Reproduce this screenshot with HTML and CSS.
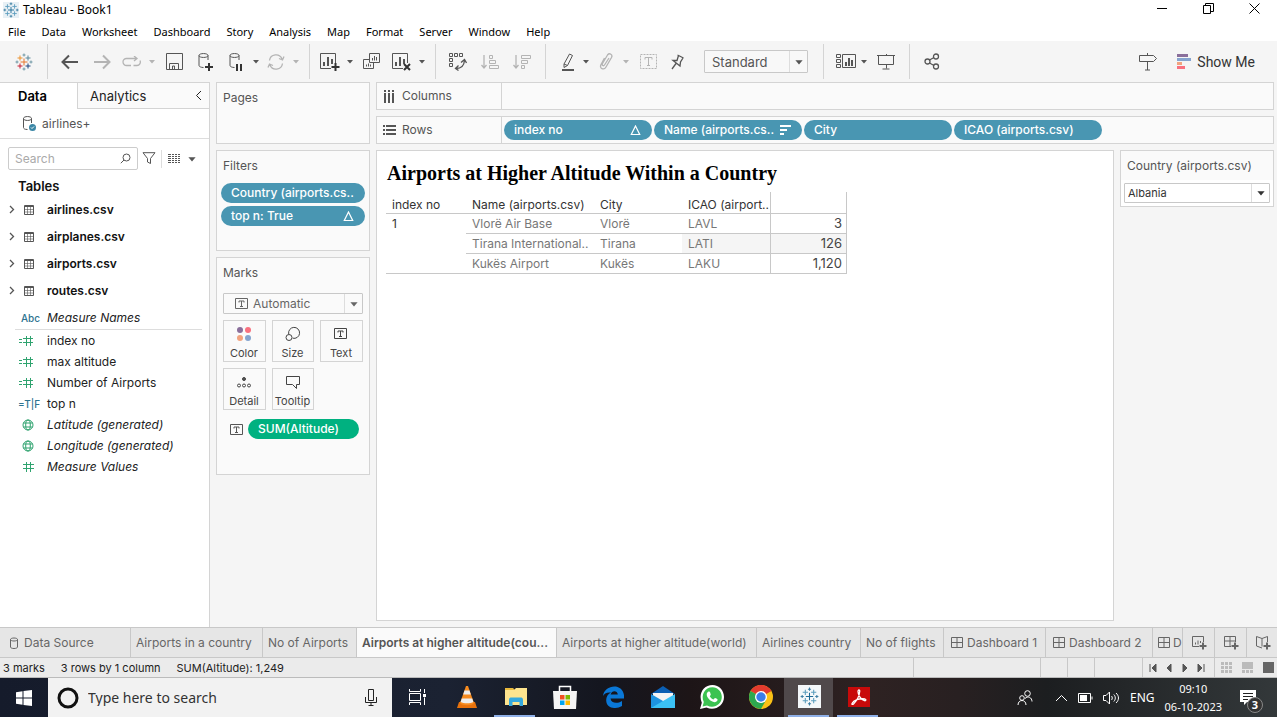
FILE: index.html
```
<!DOCTYPE html>
<html lang="en">
<head>
<meta charset="utf-8">
<title>Tableau - Book1</title>
<link rel="stylesheet" href="styles.css">
</head>
<body>
<svg class="sprite" aria-hidden="true">
  <symbol id="tableau" viewBox="0 0 18 18">
    <path class="c1" d="M9 5.500v7M5.500 9h7"/>
    <path class="c2" d="M5 2.500v5M2.500 5h5"/>
    <path class="c3" d="M13 2.500v5M10.500 5h5"/>
    <path class="c4" d="M5 10.500v5M2.500 13h5"/>
    <path class="c5" d="M13 10.500v5M10.500 13h5"/>
    <path class="c6" d="M9 .5v3M7.500 2h3M9 14.500v3M7.500 16h3M2 7.500v3M.5 9h3M16 7.500v3M14.500 9h3"/>
  </symbol>
  <symbol id="caret" viewBox="0 0 8 5"><path fill="currentColor" d="M1 1h6L4 4.500z"/></symbol>
  <symbol id="cyl" viewBox="0 0 18 18"><path d="M3 3.500v10c0 1 2 2 4.500 2M12 8V3.500M3 3.500C3 .9 12 .9 12 3.500S3 6.100 3 3.500"/></symbol>
  <symbol id="table" viewBox="0 0 12 12"><path d="M1.500 1.500h9v9h-9zM1 2.500h10"/><path opacity=".6" d="M1.500 5.500h9M1.500 8h9M4.500 3v7M7.500 3v7"/></symbol>
  <symbol id="chev" viewBox="0 0 6 9"><path stroke-width="1.300" d="M1 1l3.500 3.500L1 8"/></symbol>
  <symbol id="hash" viewBox="0 0 18 12"><path d="M8.500 1v10M12.500 1v10M5 3.500h11M5 7.500h11"/></symbol>
  <symbol id="eqhash" viewBox="0 0 18 12"><path d="M8.500 1v10M12.500 1v10M5 3.500h10M5 7.500h10M1 4.500h3M1 7.500h3"/></symbol>
  <symbol id="globe" viewBox="0 0 18 12"><circle cx="10" cy="6" r="5"/><ellipse cx="10" cy="6" rx="2.300" ry="5"/><path d="M5.500 4h9M5.500 8h9"/></symbol>
  <symbol id="textbox" viewBox="0 0 13 11"><path d="M.5.5h12v10H.5zM4 4.500v-1.500h5v1.500M6.500 3v5M5 8.500h3"/></symbol>
  <symbol id="dash" viewBox="0 0 12 12"><path d="M.5.5h11v10H.5zM6 .5v10M.5 5.500h11"/></symbol>
  <symbol id="delta" viewBox="0 0 11 11"><path stroke-width="1.200" d="M5.500 1L9.700 9.500H1.300z"/></symbol>
</svg>

<header class="titlebar">
  <svg class="ico app-icon blue" width="16" height="16"><use href="#tableau"/></svg>
  <span class="title">Tableau - Book1</span>
  <div class="win-buttons">
    <button aria-label="Minimize"><svg width="11" height="11"><path d="M0 5.500h10"/></svg></button>
    <button aria-label="Restore"><svg width="11" height="11"><path d="M.5 2.500h7v8h-7zM2.500 2.500v-2h8v8h-3"/></svg></button>
    <button aria-label="Close"><svg width="11" height="11"><path d="M.5.5l10 10M10.500.5l-10 10"/></svg></button>
  </div>
</header>

<nav class="menu">
  <button>File</button><button>Data</button><button>Worksheet</button><button>Dashboard</button><button>Story</button><button>Analysis</button><button>Map</button><button>Format</button><button>Server</button><button>Window</button><button>Help</button>
</nav>

<div class="toolbar">
  <button class="tool logo" aria-label="Start page"><svg class="ico" width="18" height="18"><use href="#tableau"/></svg></button>
  <i class="sep"></i>
  <button class="tool" aria-label="Undo"><svg class="ico thick" width="18" height="16"><path d="M17 8H2M8 1.500L1.500 8 8 14.500"/></svg></button>
  <button class="tool off" aria-label="Redo"><svg class="ico thick" width="18" height="16"><path d="M1 8h15M10 1.500L16.500 8 10 14.500"/></svg></button>
  <button class="tool mid off" aria-label="Replay"><svg class="ico mid-line" width="20" height="12"><path d="M9 9.500H4.500a3.500 3.500 0 010-7H14M11.500 9.500H15a3.500 3.500 0 003-5M12 0l3 2.500L12 5"/></svg></button>
  <button class="tool drop off" aria-label="Replay options"><svg width="8" height="5"><use href="#caret"/></svg></button>
  <button class="tool" aria-label="Save"><svg class="ico" width="17" height="17"><path d="M.5.500h16v16H.5zM3.500 16v-5.500h9V16M6.500 16v-3h2v3"/></svg></button>
  <button class="tool" aria-label="New data source"><svg class="ico" width="18" height="20" viewBox="1 0 18 20"><use href="#cyl" width="18" height="18"/><path class="dark" d="M13 11v8M9 15h8"/></svg></button>
  <button class="tool mid" aria-label="Pause updates"><svg class="ico" width="18" height="20" viewBox="0 0 18 20"><use href="#cyl" width="18" height="18"/><path class="dark" d="M10 12v7M14 12v7"/></svg></button>
  <button class="tool drop" aria-label="Pause options"><svg width="8" height="5"><use href="#caret"/></svg></button>
  <button class="tool mid off" aria-label="Refresh"><svg class="ico mid-line" width="18" height="16"><path d="M2.500 6.500A6.500 6.500 0 0115 5M15.500 9.500A6.500 6.500 0 013 11M17 2.500L15.500 6 12 4.500M1 13.500L2.500 10 6 11.500"/></svg></button>
  <button class="tool drop off" aria-label="Refresh options"><svg width="8" height="5"><use href="#caret"/></svg></button>
  <i class="sep"></i>
  <button class="tool mid" aria-label="New worksheet"><svg class="ico" width="20" height="18"><path d="M11 15.500H.5V.5h15V10"/><path class="bars" d="M4 13V9M8 13V4M12 11V6"/><path class="dark" d="M15.500 10v8M11.500 14h8"/></svg></button>
  <button class="tool drop" aria-label="New options"><svg width="8" height="5"><use href="#caret"/></svg></button>
  <button class="tool" aria-label="Duplicate"><svg class="ico" width="18" height="17"><path d="M6.500.5h10v9h-10zM6 6.500H.5v9h10V10M9.500 7.500V5M11.500 7.500V3M13.500 7.500V4M3.500 13.500v-2M5.500 13.500v-3M7.500 13.500v-2"/></svg></button>
  <button class="tool mid" aria-label="Clear"><svg class="ico" width="20" height="18"><path d="M11 15.500H.5V.5h15V10"/><path class="bars" d="M4 13V9M8 13V4M12 11V6"/><path class="dark" d="M12 11l6 6M18 11l-6 6"/></svg></button>
  <button class="tool drop" aria-label="Clear options"><svg width="8" height="5"><use href="#caret"/></svg></button>
  <i class="sep"></i>
  <button class="tool" aria-label="Swap"><svg class="ico" width="18" height="18"><path d="M.5.500h3v3h-3zM5.500.500h3v3h-3zM10.500.500h3v3h-3zM.5 5.500h3v3h-3zM.5 10.500h3v3h-3z"/><path class="mid-line" d="M7 15.500c5 0 8-2 8.500-8M12 9.500l3.500-3 2 3.500M9.500 12.500L6.500 15.500l3 2"/></svg></button>
  <button class="tool off" aria-label="Sort ascending"><svg class="ico" width="18" height="16"><path class="mid-line" d="M3 1v12M.5 11L3 14l2.500-3"/><path d="M8.500 1.500h3v3h-3zM8.500 6.500h6v3h-6zM8.500 11.500h9v3h-9z"/></svg></button>
  <button class="tool off" aria-label="Sort descending"><svg class="ico" width="18" height="16"><path class="mid-line" d="M3 1v12M.5 11L3 14l2.500-3"/><path d="M8.500 1.500h9v3h-9zM8.500 6.500h6v3h-6zM8.500 11.500h3v3h-3z"/></svg></button>
  <i class="sep"></i>
  <button class="tool wide" aria-label="Highlight"><svg class="ico" width="14" height="18"><path d="M3 11L8.500 1l3 1.500L6.500 12.500l-3.500 2zM3 11l3.500 1.500"/><path class="bars" d="M1 17h12"/></svg></button>
  <button class="tool drop" aria-label="Highlight options"><svg width="8" height="5"><use href="#caret"/></svg></button>
  <button class="tool mid off" aria-label="Group"><svg class="ico mid-line" width="14" height="17"><path d="M10 5L5.500 12c-1 1.500-3 .5-2-1.500L8.500 2c2-2.500 5.500-.5 4 2.500L7 14c-2 3.500-7 1.500-5-2.500L5.500 5"/></svg></button>
  <button class="tool drop off" aria-label="Group options"><svg width="8" height="5"><use href="#caret"/></svg></button>
  <button class="tool off" aria-label="Show mark labels"><svg class="ico" width="17" height="15"><path stroke-dasharray="2 1" d="M.5.500h16v14H.5z"/><path d="M5 5.500v-2h7v2M8.500 3.500v8M7 11.500h3"/></svg></button>
  <button class="tool mid" aria-label="Fix axes"><svg class="ico mid-line" width="14" height="16"><path d="M6.500 1L12.500 4M7.500 1.500L6 6.500 2 6.500 9 12l.5-4L12 4M5 9.500L1 15"/></svg></button>
  <label class="picker fit"><select aria-label="Fit"><option>Standard</option></select><span class="arrow"><svg width="8" height="5"><use href="#caret"/></svg></span></label>
  <i class="sep"></i>
  <button class="tool wide" aria-label="Show cards"><svg class="ico" width="20" height="15"><path d="M.5.500h4v3h-4zM.5 5.500h4v3h-4zM.5 10.500h4v3h-4zM6.500.5h13v13h-13z"/><path class="bars" d="M10 12V8M13 12V4M16 12V6"/></svg></button>
  <button class="tool drop" aria-label="Card options"><svg width="8" height="5"><use href="#caret"/></svg></button>
  <button class="tool" aria-label="Presentation mode"><svg class="ico" width="18" height="16"><path d="M0 1.500h18M1.500 2v8.500h15V2M9.500 0v1M9.500 10.500v4M5.500 15h7"/></svg></button>
  <i class="sep"></i>
  <button class="tool" aria-label="Share"><svg class="ico mid-line" width="16" height="17"><circle cx="3.500" cy="8.500" r="2.500"/><circle cx="12" cy="3.500" r="2.500"/><circle cx="12" cy="13.500" r="2.500"/><path d="M5.500 7L10 4.500M5.500 10l4.500 2.500"/></svg></button>
  <div class="grow"></div>
  <button class="tool" aria-label="Guide"><svg class="ico" width="20" height="19"><path d="M1.500 3.500h14L18.500 6.500l-3 3h-14zM9.500 1v2M9.500 10v8M7 18h5"/></svg></button>
  <button class="showme"><svg width="14" height="15"><path fill="#8a6f9b" d="M0 0h11v3H0z"/><path fill="#86a4cf" d="M0 4h14v3H0z"/><path fill="#f2a37f" d="M0 8h5v3H0z"/><path fill="#f9717f" d="M0 12h8v3H0z"/></svg>Show Me</button>
</div>

<main class="workspace">
  <aside class="data-pane">
    <div class="pane-tabs">
      <button class="pane-tab on">Data</button>
      <button class="pane-tab">Analytics<svg class="ico" width="7" height="11"><path d="M6 1L1.500 5.500 6 10"/></svg></button>
    </div>
    <button class="source"><svg class="ico" width="18" height="18"><path d="M1.500 3.500v9c0 1 1 2 4 2M9.500 8V3.500M1.500 3.500C1.500.9 9.500.9 9.500 3.500S1.500 6.100 1.500 3.500"/><circle cx="10.500" cy="12.500" r="3.500" fill="#3b87a6" stroke="none"/><path stroke="#fff" d="M9 12.500l1 1 2-2"/></svg>airlines+</button>
    <div class="find">
      <label class="search"><input type="text" placeholder="Search" aria-label="Search"><svg class="ico" width="11" height="11"><circle cx="6.500" cy="4.500" r="3.500"/><path d="M4 7L.8 10.200"/></svg></label>
      <button aria-label="Filter fields"><svg class="ico" width="14" height="13"><path d="M1 .7h12L8.500 6.500v5l-3-1.500V6.500z"/></svg></button>
      <i></i>
      <button aria-label="View options"><svg class="ico" width="12" height="10"><path stroke-dasharray="3 1 2 1 2 1 2 9" d="M0 .5h12M0 2.500h12M0 4.500h12M0 6.500h12M0 8.500h12"/></svg></button>
      <button aria-label="More" class="more"><svg width="8" height="5"><use href="#caret"/></svg></button>
    </div>
    <h2>Tables</h2>
    <ul class="tables">
      <li><button><svg class="ico" width="6" height="9"><use href="#chev"/></svg><svg class="ico" width="12" height="12"><use href="#table"/></svg>airlines.csv</button></li>
      <li><button><svg class="ico" width="6" height="9"><use href="#chev"/></svg><svg class="ico" width="12" height="12"><use href="#table"/></svg>airplanes.csv</button></li>
      <li><button><svg class="ico" width="6" height="9"><use href="#chev"/></svg><svg class="ico" width="12" height="12"><use href="#table"/></svg>airports.csv</button></li>
      <li><button><svg class="ico" width="6" height="9"><use href="#chev"/></svg><svg class="ico" width="12" height="12"><use href="#table"/></svg>routes.csv</button></li>
    </ul>
    <ul class="fields">
      <li class="names gen"><span class="kind">Abc</span>Measure Names</li>
      <li><span class="kind green"><svg class="ico" width="18" height="12"><use href="#eqhash"/></svg></span>index no</li>
      <li><span class="kind green"><svg class="ico" width="18" height="12"><use href="#eqhash"/></svg></span>max altitude</li>
      <li><span class="kind green"><svg class="ico" width="18" height="12"><use href="#eqhash"/></svg></span>Number of Airports</li>
      <li><span class="kind">=T|F</span>top n</li>
      <li class="gen"><span class="kind green"><svg class="ico" width="18" height="12"><use href="#globe"/></svg></span>Latitude (generated)</li>
      <li class="gen"><span class="kind green"><svg class="ico" width="18" height="12"><use href="#globe"/></svg></span>Longitude (generated)</li>
      <li class="gen"><span class="kind green"><svg class="ico" width="18" height="12"><use href="#hash"/></svg></span>Measure Values</li>
    </ul>
  </aside>

  <section class="cards">
    <div class="card pages"><h3>Pages</h3></div>
    <div class="card filters">
      <h3>Filters</h3>
      <button class="pill"><span>Country (airports.cs..</span></button>
      <button class="pill"><span>top n: True</span><svg class="ico" width="11" height="11"><use href="#delta"/></svg></button>
    </div>
    <div class="card marks">
      <h3>Marks</h3>
      <label class="picker kindpick"><svg class="ico" width="13" height="11"><use href="#textbox"/></svg><select aria-label="Mark type"><option>Automatic</option></select><span class="arrow"><svg width="8" height="5"><use href="#caret"/></svg></span></label>
      <div class="mark-grid">
        <button><svg width="16" height="16"><circle cx="4" cy="4" r="3" fill="#8a6f9b"/><circle cx="12" cy="4" r="3" fill="#f9717f"/><circle cx="4" cy="12" r="3" fill="#f2a37f"/><circle cx="12" cy="12" r="3" fill="#86a4cf"/></svg>Color</button>
        <button><svg class="ico" width="16" height="16"><path d="M3.700 8a5.500 5.500 0 1 1 4 4.200"/><circle cx="4" cy="11.500" r="3"/></svg>Size</button>
        <button><svg class="ico" width="16" height="16" viewBox="-1 -2 16 16"><use href="#textbox" width="13" height="11"/></svg>Text</button>
        <button><svg class="ico" width="16" height="16"><circle cx="8" cy="5" r="1.500" fill="#555"/><circle cx="3" cy="11.500" r="1.500"/><circle cx="8" cy="11.500" r="1.500"/><circle cx="13" cy="11.500" r="1.500"/></svg>Detail</button>
        <button><svg class="ico" width="16" height="16"><path d="M1.500 2.500h13v8h-3v4l-4-4h-6z"/></svg>Tooltip</button>
      </div>
      <div class="measure"><svg class="ico" width="13" height="11"><use href="#textbox"/></svg><button class="pill agg"><span>SUM(Altitude)</span></button></div>
    </div>
  </section>

  <section class="stage">
    <div class="shelf"><div class="shelf-name"><svg class="ico" width="13" height="13"><path stroke-width="2" stroke-dasharray="2 1 10 9" d="M2 0v13M6 0v13M10 0v13"/></svg>Columns</div></div>
    <div class="shelf"><div class="shelf-name"><svg class="ico" width="13" height="11"><path stroke-width="2" stroke-dasharray="2 1 10 9" d="M0 1h13M0 5h13M0 9h13"/></svg>Rows</div>
      <div class="shelf-pills">
        <button class="pill"><span>index no</span><svg class="ico" width="11" height="11"><use href="#delta"/></svg></button>
        <button class="pill"><span>Name (airports.cs..</span><svg class="ico" width="11" height="11"><path stroke-width="2" d="M0 1h11M0 5h7M0 9h4"/></svg></button>
        <button class="pill"><span>City</span></button>
        <button class="pill"><span>ICAO (airports.csv)</span></button>
      </div>
    </div>
    <div class="stage-body">
      <div class="view">
        <h1>Airports at Higher Altitude Within a Country</h1>
        <table>
          <colgroup><col class="w-idx"><col class="w-name"><col class="w-mid"><col class="w-mid"><col class="w-val"></colgroup>
          <thead><tr><th>index no</th><th>Name (airports.csv)</th><th>City</th><th>ICAO (airport..</th><td class="val"></td></tr></thead>
          <tbody>
            <tr><th rowspan="3">1</th><td>Vlorë Air Base</td><td>Vlorë</td><td>LAVL</td><td class="val">3</td></tr>
            <tr><td>Tirana International..</td><td>Tirana</td><td class="band">LATI</td><td class="val band">126</td></tr>
            <tr><td>Kukës Airport</td><td>Kukës</td><td>LAKU</td><td class="val">1,120</td></tr>
          </tbody>
        </table>
      </div>
      <div class="filter-card">
        <label for="country">Country (airports.csv)</label>
        <div class="filter-body"><div class="picker"><select id="country"><option>Albania</option></select><span class="arrow"><svg width="8" height="5"><use href="#caret"/></svg></span></div></div>
      </div>
    </div>
  </section>
</main>

<nav class="sheets">
  <button class="s-source"><svg class="ico" width="10" height="12"><path d="M1.500 2.500v7.500c0 2 7 2 7 0V2.500M1.500 2.500c0-2 7-2 7 0s-7 2-7 0"/></svg>Data Source</button>
  <button class="s-132">Airports in a country</button>
  <button class="s-94">No of Airports</button>
  <button class="s-200 on">Airports at higher altitude(cou...</button>
  <button class="s-200">Airports at higher altitude(world)</button>
  <button class="s-104">Airlines country</button>
  <button class="s-83">No of flights</button>
  <button class="s-102 board"><svg class="ico" width="12" height="12"><use href="#dash"/></svg>Dashboard 1</button>
  <button class="s-107 board"><svg class="ico" width="12" height="12"><use href="#dash"/></svg>Dashboard 2</button>
  <button class="s-cut"><svg class="ico" width="12" height="12"><use href="#dash"/></svg>D</button>
  <button class="s-new" aria-label="New worksheet"><svg class="ico" width="16" height="15"><path d="M8 11.500H1.500v-10h11V7M4.500 9.500v-2M7 9.500v-4M9.500 8V6"/><path class="bars" d="M12 7.500v7M8.500 11h7"/></svg></button>
  <button class="s-new" aria-label="New dashboard"><svg class="ico" width="16" height="15"><path d="M8 11.500H1.500v-10h11V7M7 1.500v10M1.500 6h11"/><path class="bars" d="M12 7.500v7M8.500 11h7"/></svg></button>
  <button class="s-new" aria-label="New story"><svg class="ico" width="16" height="15"><path d="M7 13L1.500 11V1.500L7 3.500 12.500 1.500V7M7 3.500v8"/><path class="bars" d="M12 7.500v7M8.500 11h7"/></svg></button>
</nav>

<div class="status">
  <span>3 marks</span><span>3 rows by 1 column</span><span>SUM(Altitude): 1,249</span>
  <div class="slots"><i class="w127"></i><i></i><i></i><i class="w48"></i></div>
  <div class="pager">
    <button aria-label="First"><svg width="8" height="8"><path d="M1 0v8M7 0v8L3 4z"/></svg></button>
    <button aria-label="Previous"><svg width="8" height="8"><path d="M6 0v8L2 4z"/></svg></button>
    <button aria-label="Next"><svg width="8" height="8"><path d="M2 0v8L6 4z"/></svg></button>
    <button aria-label="Last"><svg width="8" height="8"><path d="M7 0v8M1 0v8L5 4z"/></svg></button>
  </div>
  <div class="modes">
    <button aria-label="Sheet sorter"><svg width="11" height="11"><path fill="#bbb" d="M0 0h3v3H0zM4 0h3v3H4zM8 0h3v3H8zM0 4h3v3H0zM4 4h3v3H4zM8 4h3v3H8zM0 8h3v3H0zM4 8h3v3H4zM8 8h3v3H8z"/></svg></button>
    <button aria-label="Filmstrip"><svg width="11" height="11"><path fill="#bbb" d="M0 0h11v7H0zM0 8h3v3H0zM4 8h3v3H4zM8 8h3v3H8z"/></svg></button>
    <button aria-label="Tabs"><svg width="11" height="11"><path fill="#666" d="M0 0h11v11H0z"/></svg></button>
  </div>
</div>

<footer class="taskbar">
  <button class="start" aria-label="Start"><svg width="16" height="16"><path fill="#fff" d="M0 2.200L6.500 1.300V7.500H0zM7.500 1.100L16 0v7.500H7.500zM0 8.500h6.500v6.200L0 13.800zM7.500 8.500H16V16l-8.500-1.100z"/></svg></button>
  <label class="win-search"><svg width="22" height="22"><circle cx="11" cy="11" r="9" fill="none" stroke="#111" stroke-width="3"/></svg><input type="text" placeholder="Type here to search" aria-label="Type here to search"><svg class="mic" width="12" height="17"><path fill="none" stroke="#222" d="M3.500.5h5v11h-5zM.5 8v5.500h11V8M6 14v2M3.500 16.500h5"/></svg></label>
  <button class="app" aria-label="Task view"><svg width="18" height="16"><path fill="none" stroke="#fff" d="M.5 0v2.500h11V0M.5 4.500h11v7H.5zM.5 16v-2.500h11V16M15.500 0v4M15.500 8.500V16"/><path fill="#fff" d="M14 5h3v3h-3z"/></svg></button>
  <button class="app" aria-label="VLC"><svg width="20" height="24"><path fill="#e8720c" d="M2 17h16l2 6H0z"/><path fill="#f78b1f" d="M9 1h2l6 17c-2 3-12 3-14 0z"/><path fill="#eee" d="M7.500 5.500L6.200 9.500h7.600L12.500 5.500zM4.800 13.500l-1.200 3.500c3 1.800 10 1.800 12.800 0l-1.200-3.500z"/></svg></button>
  <button class="app run" aria-label="File Explorer"><svg width="22" height="19"><path fill="#e9b93c" d="M0 1h8l2 2H0z"/><path fill="#fde48e" d="M0 3h9l2-2h11v17H0z"/><path fill="#35a9de" d="M4 19v-6c0-2 1-2.500 2.500-2.500h9c1.500 0 2.500.5 2.500 2.500v6h-3.500v-4h-7v4z"/></svg></button>
  <button class="app" aria-label="Store"><svg width="24" height="24"><path fill="none" stroke="#fff" stroke-width="1.500" d="M6.500 7V1.500h11V7"/><path fill="#f5f5f5" d="M0 6h24l-1 18H1z"/><path fill="#f25022" d="M7 10h4.500v4.500H7z"/><path fill="#7fba00" d="M12.500 10H17v4.500h-4.500z"/><path fill="#00a4ef" d="M7 15.500h4.500V20H7z"/><path fill="#ffb900" d="M12.500 15.500H17V20h-4.500z"/></svg></button>
  <button class="app" aria-label="Edge"><svg width="22" height="22"><path fill="#0a78d7" d="M0 10C1-1 19-4 21 9v3.500H7.500c.5 5 7 5.500 11.500 2.500v5C12 24 3.500 22 3.200 14.500 3 11 5 8 8 6.500 3.500 6 1 8 0 10zM7.600 8.500h7.200C14.500 4 8.500 4 7.600 8.500z"/></svg></button>
  <button class="app" aria-label="Mail"><svg width="24" height="22"><path fill="#0b5fb3" d="M0 8L12 0l12 8z"/><path fill="#f4f4f4" d="M2 7h20v8H2z"/><path fill="#1d93e0" d="M0 8l24 14H0z"/><path fill="#3bc1f5" d="M24 8L0 22h24z"/></svg></button>
  <button class="app" aria-label="WhatsApp"><svg width="24" height="24"><path fill="#fff" d="M0 24l1.800-6.300C-2 9 3.500 0 12.500 0 19 0 24 5.500 24 12c0 9-9.500 14.300-17.500 10.500z"/><path fill="#3cc351" d="M2.600 21.400l1.200-4.300C.5 10 5 2.200 12.500 2.200c5.300 0 9.300 4.500 9.300 9.800 0 7.500-8 12-14.800 8.400z"/><path fill="#fff" d="M8.500 6.500c2-.5 1.800 2 2.300 3.200l-1 1.500c.8 1.600 2 2.700 3.700 3.400l1.400-1.500c1.300.4 3 .8 2.700 2-1 2.700-4 2.400-6.300 1C8 14 4.500 9 8.500 6.500z"/></svg></button>
  <button class="app" aria-label="Chrome"><svg width="24" height="24"><circle cx="12" cy="12" r="12" fill="#fbc116"/><path fill="#e33b2e" d="M12 12L1.600 6C6-2 18-2 22.400 6z"/><path fill="#2da94f" d="M12 12L1.600 6C-3 14 3 24 12 24l5-9z"/><circle cx="12" cy="12" r="6" fill="#fff"/><circle cx="12" cy="12" r="4.700" fill="#3b7de9"/></svg></button>
  <button class="app run active" aria-label="Tableau"><svg class="ico tile blue" width="23" height="23" viewBox="-2 -2 22 22"><use href="#tableau" width="18" height="18"/></svg></button>
  <button class="app run" aria-label="Acrobat"><svg width="22" height="20"><path fill="#c80a0a" d="M0 0h22v20H0z"/><path fill="none" stroke="#fff" stroke-width="1.300" d="M4 16.500c1.500-3.500 7.500-5.500 13-4.500 1.500.5 1 2-.5 1.700C13 13 10 8 10 4.500c0-2 2-2 1.700 0C11.300 9 8 14.500 5.500 17c-1 .8-2 .3-1.500-.5z"/></svg></button>
  <div class="tray">
    <svg class="line" width="16" height="16"><circle cx="10.500" cy="3.500" r="2.800"/><circle cx="5" cy="8" r="2.300"/><path d="M8 8.500c3-3 7-1 7 3M1 15c0-6 8-6 8 0"/></svg>
    <svg class="line chev-up" width="13" height="8"><path d="M1 7l5.500-5.500L12 7"/></svg>
    <svg class="line" width="15" height="10"><path d="M.5.500h12v9H.5zM14 3.500v3"/><path fill="#fff" stroke="none" d="M2 2h7v6H2z"/></svg>
    <svg class="line" width="17" height="14"><path d="M.5 4.500h2.500L6.500 1v12L3 9.500H.5zM8.500 5c1 1 1 3 0 4M10.800 3.500c2 2 2 5 0 7M13 2c3.300 3 3.300 7 0 10"/></svg>
    <span>ENG</span>
    <time>09:10<br>06-10-2023</time>
    <button class="notes" aria-label="3 notifications"><svg width="16" height="15"><path fill="#fff" d="M0 0h16v12H7l-3 3v-3H0z"/><path stroke="#222" d="M3 3.500h10M3 6.500h10M3 9.500h5"/></svg><b>3</b></button>
  </div>
</footer>
</body>
</html>
```

FILE: styles.css
```
* { box-sizing: border-box; }
body {
  margin: 0;
  height: 100vh;
  display: flex;
  flex-direction: column;
  overflow: hidden;
  background: #f5f5f5;
  color: #333;
  font: 12px/16px Inter, "Open Sans", sans-serif;
}
button {
  margin: 0;
  padding: 0;
  border: 0;
  background: none;
  color: inherit;
  font: inherit;
  white-space: nowrap;
}
input, select {
  border: 0;
  outline: 0;
  padding: 0;
  margin: 0;
  background: none;
  color: inherit;
  font: inherit;
  min-width: 0;
  appearance: none;
}
h1, h2, h3, ul { margin: 0; padding: 0; list-style: none; font-weight: 400; }
svg { display: block; flex: none; }
.sprite { position: absolute; width: 0; height: 0; }
.ico { fill: none; stroke: currentColor; stroke-width: 1; }
.ico .dark { stroke: #333; stroke-width: 2; }
.ico .bars { stroke-width: 2; }
.ico.thick { stroke-width: 2; }
.ico .mid-line, .ico.mid-line { stroke-width: 1.3; }
.grow { flex: 1; }

/* logo colours */
.c1 { stroke: var(--c1, #e8762d); }
.c2 { stroke: var(--c2, #eb912c); }
.c3 { stroke: var(--c3, #59879b); }
.c4 { stroke: var(--c4, #c72037); }
.c5 { stroke: var(--c5, #1f447e); }
.c6 { stroke: var(--c6, #7099a6); }
.blue { --c1: #1f6b96; --c2: #5b9dbd; --c3: #5b9dbd; --c4: #5b9dbd; --c5: #5b9dbd; --c6: #3c7ea3; }

.titlebar { display: flex; flex: none; height: 20px; padding-left: 3px; align-items: center; background: #fff; color: #000; font-family: "Noto Sans", sans-serif; }
.app-icon { background: #e8f0f5; }
.title { margin-left: 4px; }
.win-buttons { display: flex; align-self: flex-start; margin-left: auto; }
.win-buttons button { width: 46px; height: 16px; display: grid; place-items: center; }
.win-buttons svg { fill: none; stroke: #000; }

.menu { display: flex; flex: none; height: 21px; padding: 2px 0 0 8px; gap: 16px; align-items: center; background: #fff; color: #000; font-family: "Noto Sans", sans-serif; font-size: 11px; }

.toolbar { display: flex; flex: none; height: 41px; align-items: center; color: #555; }
.tool { flex: none; width: 32px; height: 32px; display: grid; place-items: center; }
.tool.logo { width: 40px; padding-left: 7px; }
.tool.mid { width: 28px; }
.tool.wide { width: 28px; padding-left: 4px; }
.tool.drop { width: 12px; }
.tool.off { color: #b4b4b4; }
.sep { flex: none; width: 1px; height: 35px; margin: 0 6px 0 7px; background: #d4d4d4; }
.picker { display: flex; align-items: center; background: #fff; border: 1px solid #c8c8c8; border-radius: 1px; }
.picker select { flex: 1; }
.arrow { align-self: stretch; display: grid; place-items: center; width: 18px; border-left: 1px solid #ddd; pointer-events: none; }
.arrow svg, .more svg { width: 10px; height: 6px; }
.fit { flex: none; width: 104px; height: 23px; margin: 0 8px 0 12px; padding-left: 7px; background: #f8f8f8; font-size: 13px; }
.showme { display: flex; gap: 6px; align-items: center; margin: 0 22px 0 13px; color: #333; font: 14px/16px Roboto, sans-serif; }

.workspace { flex: 1; min-height: 0; display: flex; gap: 6px; padding-right: 3px; }
.data-pane { flex: none; width: 210px; background: #fff; border: solid #d4d4d4; border-width: 1px 1px 0 0; color: #222; }
.pane-tabs { display: flex; height: 26px; font-size: 13px; }
.pane-tab { flex: 1; display: flex; justify-content: space-between; align-items: center; padding: 0 7px 0 12px; background: #fafafa; border: solid #d4d4d4; border-width: 0 0 1px 1px; }
.pane-tab.on { flex: none; width: 77px; padding-left: 18px; background: #fff; border: 0; font-weight: 600; color: #000; }
.source { width: 100%; height: 30px; display: flex; gap: 2px; align-items: center; padding-left: 22px; border-bottom: 1px solid #ddd; color: #555; }
.find { display: flex; align-items: center; padding: 8px; height: 39px; color: #555; }
.find i { width: 1px; height: 18px; margin: 0 6px 0 5px; background: #ddd; }
.find .more { margin-left: 7px; }
.search { display: flex; align-items: center; width: 130px; height: 23px; margin-right: 4px; padding: 0 6px; border: 1px solid #ccc; border-radius: 2px; }
.search input { flex: 1; }
::placeholder { color: #aaa; opacity: 1; }
h2 { height: 18px; padding-left: 18px; font-size: 13px; font-weight: 600; color: #111; line-height: 16px; }
.tables button { display: flex; align-items: center; height: 27px; padding-left: 9px; font-weight: 600; color: #111; }
.tables svg { color: #555; }
.tables svg + svg { margin: 0 12px 0 8px; }
.fields li { display: flex; align-items: center; height: 21px; }
.fields .names { height: 26px; padding-top: 2px; margin: 0 7px 0 15px; border-bottom: 1px solid #ddd; }
.fields .names .kind { width: 32px; padding-left: 6px; }
.kind { width: 47px; padding-left: 18px; color: #2d7390; font-size: 10px; font-style: normal; font-weight: 500; }
.kind.green { color: #2fa36f; }
.gen { font-style: italic; }

.cards { flex: none; width: 154px; display: flex; flex-direction: column; gap: 6px; color: #555; }
.card { display: flex; flex-direction: column; padding: 7px 4px; background: #fafafa; border: 1px solid #d4d4d4; }
h3 { font-size: 12px; line-height: 16px; margin-left: 2px; }
.pages { height: 62px; }
.filters { height: 101px; }
.marks { height: 218px; }
.pill { display: flex; flex: none; align-items: center; justify-content: space-between; height: 20px; padding: 0 11px 0 10px; border-radius: 10px; background: #4996b2; color: #fff; font-weight: 500; }
.filters h3 { margin-bottom: 9px; }
.filters .pill + .pill { margin-top: 3px; }
.kindpick { height: 21px; margin: 12px 2px 0; padding-left: 11px; gap: 5px; flex: none; background: #fafafa; color: #666; }
.mark-grid { display: grid; grid-template-columns: 43px 42px 43px; gap: 6px; margin: 6px 2px 0; }
.mark-grid button { display: flex; flex-direction: column; align-items: center; justify-content: flex-end; gap: 3px; height: 42px; padding-right: 1px; border: 1px solid #d4d4d4; font-size: 11px; color: #444; }
.measure { display: flex; align-items: center; gap: 5px; margin: 9px 0 0 9px; }
.agg { width: 111px; background: #00b180; }

.stage { flex: 1; min-width: 0; display: flex; flex-direction: column; gap: 6px; padding-bottom: 6px; }
.shelf { flex: none; display: flex; height: 28px; background: #fafafa; border: 1px solid #d4d4d4; color: #555; }
.shelf-name { width: 125px; display: flex; align-items: center; gap: 6px; padding-left: 6px; border-right: 1px solid #d4d4d4; }
.shelf-pills { display: flex; align-items: center; gap: 2px; padding-left: 2px; }
.shelf .pill { width: 148px; }
.stage-body { flex: 1; min-height: 0; display: flex; gap: 6px; align-items: flex-start; }
.view { flex: 1; align-self: stretch; padding: 9px; background: #fff; border: 1px solid #d4d4d4; }
h1 { height: 32px; padding-left: 1px; color: #000; font: bold 20px/26px "Liberation Serif", serif; }
.filter-card { flex: none; width: 154px; border: 1px solid #d4d4d4; background: #fff; color: #555; }
.filter-card > label { display: block; height: 29px; padding: 7px 6px; background: #fafafa; }
.filter-body { padding: 3px; }
.filter-body .picker { height: 20px; padding-left: 3px; color: #333; font-size: 11px; }

table { table-layout: fixed; width: 461px; border-spacing: 0; line-height: 19px; }
.w-idx { width: 80px; }
.w-name { width: 128px; }
.w-mid { width: 88px; }
table th, table td { height: 20px; padding: 0 0 0 6px; border-bottom: 1px solid #c8c8c8; text-align: left; vertical-align: top; font-weight: 400; white-space: nowrap; color: #777; }
table th { color: #333; }
table thead th, table thead td { height: 22px; padding-top: 4px; line-height: 17px; }
table .val { padding: 0 4px 0 0; text-align: right; color: #444; border-left: 1px solid #c8c8c8; border-right: 1px solid #c8c8c8; font-size: 13px; }
.band { background: #f5f5f5; }

.sheets { display: flex; flex: none; height: 31px; border: solid #c8c8c8; border-width: 1px 0; background: #e6e6e6; color: #666; }
.sheets button { flex: none; display: flex; align-items: center; gap: 5px; padding-left: 5px; border-right: 1px solid #c8c8c8; overflow: hidden; }
.sheets .on { background: #fafafa; font-weight: 600; color: #555; }
.sheets .s-source { width: 131px; padding-left: 9px; }
.sheets .board { padding-left: 7px; gap: 4px; }
.s-132 { width: 132px; }
.s-94 { width: 94px; }
.s-200 { width: 200px; }
.s-104 { width: 104px; }
.s-83 { width: 83px; }
.s-102 { width: 102px; }
.s-107 { width: 107px; }
.sheets .s-cut { flex: 1; min-width: 0; gap: 3px; }
.sheets .s-new { width: 32px; padding-left: 8px; }
.sheets .s-new:last-child { width: 30px; border-right: 0; }

.status { display: flex; flex: none; height: 20px; align-items: center; padding-left: 3px; gap: 16px; background: #ebebeb; border-bottom: 1px solid #bbb; font-size: 11px; color: #222; }
.slots { display: flex; align-self: stretch; margin: 0 -16px 0 auto; }
.slots i { width: 27px; border-left: 1px solid #c8c8c8; }
.slots .w127 { width: 127px; }
.slots .w48 { width: 48px; }
.pager { align-self: stretch; display: flex; align-items: center; gap: 8px; padding: 0 9px 0 6px; border: solid #c8c8c8; border-width: 0 1px; }
.pager svg { fill: #555; stroke: #555; stroke-width: 1; }
.modes { display: flex; gap: 10px; margin: 0 3px 0 -10px; }

.taskbar { display: flex; flex: none; height: 39px; background: linear-gradient(90deg, #151b2b 0, #1b2232 35%, #14161f 47%, #1d1517 54%, #2e2222 68%, #282021 75%, #1c1e20 82%, #33383a 100%); color: #fff; font-family: "Noto Sans", sans-serif; }
.start { width: 48px; display: grid; place-items: center; }
.win-search { width: 344px; display: flex; align-items: center; padding: 0 15px 0 9px; background: #f2f2f2; }
.win-search input { flex: 1; margin-left: 9px; font-size: 14px; }
.win-search ::placeholder { color: #333; }
.app { width: 49px; display: grid; place-items: center; padding-left: 2px; border-bottom: 2px solid transparent; }
.run { border-image: linear-gradient(90deg, transparent 10%, #8fb0e8 10%, #8fb0e8 90%, transparent 90%) 1; border-style: solid; border-width: 0 0 2px; }
.active { background: #50494b; }
.tile { background: #f4f8fa; }
.tray { display: flex; align-items: center; margin-left: auto; padding-right: 21px; gap: 10px; }
.line { fill: none; stroke: #fff; }
.chev-up { margin-left: 12px; }
.tray time { text-align: center; font-size: 11px; line-height: 18px; }
.notes { position: relative; margin-left: 8px; }
.notes b { position: absolute; left: 7px; top: 7px; width: 16px; height: 16px; border: 1px solid #888; border-radius: 8px; background: #333; font: bold 11px/14px "Noto Sans", sans-serif; }
```
